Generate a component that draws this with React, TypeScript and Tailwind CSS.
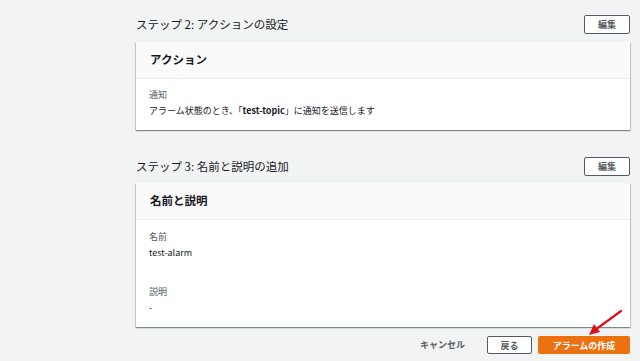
import React from "react";

const font = { fontFamily: '"Noto Sans CJK JP", "Noto Sans", sans-serif' };

function StepHeader({ title }: { title: string }) {
  return (
    <div className="flex items-center justify-between h-[19px]">
      <h2 className="text-[11.5px] leading-[19px] text-[#16191f]">{title}</h2>
      <button className="h-[19px] w-[46px] border border-[#545b64] rounded-[2px] bg-white text-[9px] font-bold text-[#545b64] leading-none">
        編集
      </button>
    </div>
  );
}

function Card({ title, children }: { title: string; children: React.ReactNode }) {
  return (
    <div className="bg-white shadow-[0_1px_1px_0_rgba(0,28,36,0.3),1px_1px_1px_0_rgba(0,28,36,0.15),-1px_1px_1px_0_rgba(0,28,36,0.15)]">
      <div className="h-[37px] bg-[#fafafa] border-b border-[#eaeded] flex items-center px-[14px]">
        <h3 className="text-[11.5px] font-bold text-[#16191f]">{title}</h3>
      </div>
      <div className="px-[13px] pb-[11px]">{children}</div>
    </div>
  );
}

function Field({ label, value }: { label: string; value: React.ReactNode }) {
  return (
    <div>
      <div className="text-[9px] leading-[16px] text-[#545b64]">{label}</div>
      <div className="text-[9px] leading-[16px] text-[#16191f]">{value}</div>
    </div>
  );
}

export default function App() {
  return (
    <div style={font} className="relative w-full h-[361px] overflow-hidden bg-[#f2f3f3] pl-[136px] pr-[10px] pt-[15px]">
      <StepHeader title="ステップ 2: アクションの設定" />
      <div className="mt-[8px]">
        <Card title="アクション">
          <div className="pt-[8px]">
            <Field
              label="通知"
              value={
                <>
                  アラーム状態のとき、「<span className="font-bold">test-topic</span>」に通知を送信します
                </>
              }
            />
          </div>
        </Card>
      </div>

      <div className="mt-[27px]">
        <StepHeader title="ステップ 3: 名前と説明の追加" />
      </div>
      <div className="mt-[7px]">
        <Card title="名前と説明">
          <div className="pt-[9px] flex flex-col gap-[23px]">
            <Field label="名前" value="test-alarm" />
            <Field label="説明" value="-" />
          </div>
        </Card>
      </div>

      <div className="mt-[9px] flex items-center justify-end">
        <button className="text-[9px] font-bold text-[#545b64] mr-[22px]">キャンセル</button>
        <button className="h-[18px] w-[45px] border border-[#545b64] rounded-[2px] bg-white text-[9px] font-bold text-[#545b64] leading-none mr-[6px]">
          戻る
        </button>
        <button className="h-[18px] w-[92px] rounded-[2px] bg-[#ec7211] text-[9px] font-bold text-white leading-none">
          アラームの作成
        </button>
      </div>

      <svg className="absolute left-[584px] top-[308px]" width="42" height="30" viewBox="0 0 42 30">
        <line x1="37" y1="3" x2="11" y2="22" stroke="#e0101a" strokeWidth="2.2" strokeLinecap="round" />
        <polygon points="5,27 10,16 16,24" fill="#e0101a" />
      </svg>
    </div>
  );
}
